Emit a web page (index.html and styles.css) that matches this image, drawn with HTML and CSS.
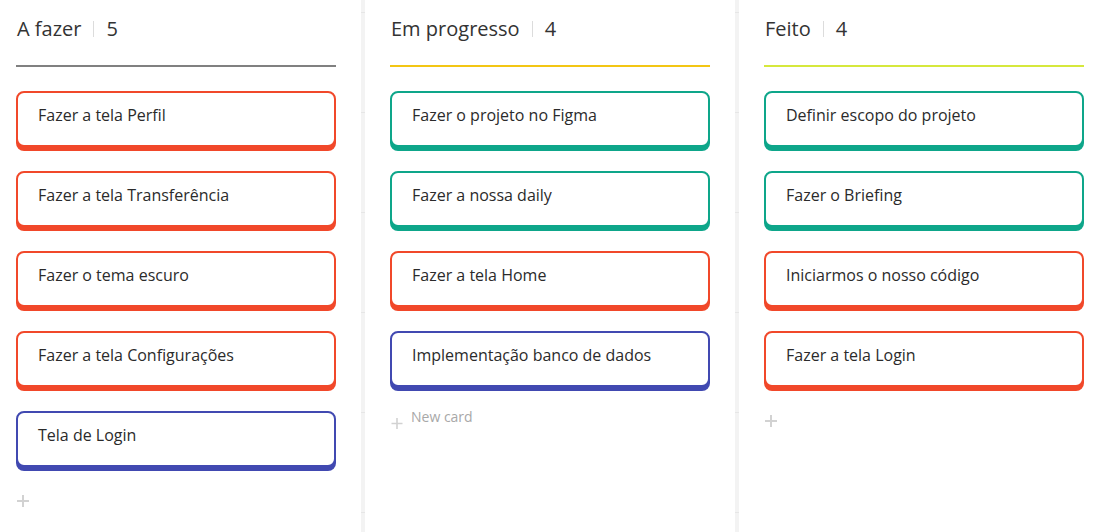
FILE: index.html
```html
<!DOCTYPE html>
<html lang="pt-BR">
<head>
<meta charset="utf-8">
<title>Kanban</title>
<link rel="stylesheet" href="styles.css">
</head>
<body>
<main class="board">
  <section class="column column-first">
    <header class="column-header header-gray">
      <h2 class="column-title">A fazer</h2>
      <span class="divider"></span>
      <span class="count">5</span>
    </header>
    <ul class="cards">
      <li class="card card-red">Fazer a tela Perfil</li>
      <li class="card card-red">Fazer a tela Transferência</li>
      <li class="card card-red">Fazer o tema escuro</li>
      <li class="card card-red">Fazer a tela Configurações</li>
      <li class="card card-blue">Tela de Login</li>
    </ul>
    <div class="add-row">
      <svg class="plus" width="12" height="12" viewBox="0 0 12 12"><path d="M6 0v12M0 6h12" stroke="#d2d2d2" stroke-width="2"/></svg>
    </div>
  </section>
  <div class="separator"></div>
  <section class="column">
    <header class="column-header header-yellow">
      <h2 class="column-title">Em progresso</h2>
      <span class="divider"></span>
      <span class="count">4</span>
    </header>
    <ul class="cards">
      <li class="card card-teal">Fazer o projeto no Figma</li>
      <li class="card card-teal">Fazer a nossa daily</li>
      <li class="card card-red">Fazer a tela Home</li>
      <li class="card card-blue">Implementação banco de dados</li>
    </ul>
    <div class="add-row add-row-text">
      <svg class="plus plus-small" width="12" height="12" viewBox="0 0 12 12"><path d="M6 1v11M0.5 6.5h11" stroke="#d2d2d2" stroke-width="1.6"/></svg>
      <span class="add-label">New card</span>
    </div>
  </section>
  <div class="separator"></div>
  <section class="column column-last">
    <header class="column-header header-lime">
      <h2 class="column-title">Feito</h2>
      <span class="divider"></span>
      <span class="count">4</span>
    </header>
    <ul class="cards">
      <li class="card card-teal">Definir escopo do projeto</li>
      <li class="card card-teal">Fazer o Briefing</li>
      <li class="card card-red">Iniciarmos o nosso código</li>
      <li class="card card-red">Fazer a tela Login</li>
    </ul>
    <div class="add-row">
      <svg class="plus" width="12" height="12" viewBox="0 0 12 12"><path d="M6 0v12M0 6h12" stroke="#d2d2d2" stroke-width="2"/></svg>
    </div>
  </section>
</main>
</body>
</html>
```

FILE: styles.css
```css
* {
  box-sizing: border-box;
}

html, body {
  margin: 0;
  padding: 0;
  background: #ffffff;
  height: 100%;
}

body {
  font-family: "Open Sans", "Noto Sans", sans-serif;
  color: #333333;
  overflow: hidden;
}

.board {
  display: flex;
  height: 532px;
}

.column {
  width: 370px;
  padding: 0 25px;
  flex: none;
}

.column-first {
  width: 361px;
  padding-left: 16px;
}

.column-last {
  flex: 1;
  padding-right: 13px;
}

.separator {
  width: 4px;
  flex: none;
  background:
    repeating-linear-gradient(to bottom,
      #f3f3f3 0px, #f3f3f3 12px,
      #e6e6e6 12px, #e6e6e6 13px,
      #f3f3f3 13px, #f3f3f3 100px);
}

.column-header {
  display: flex;
  align-items: center;
  padding: 15px 0 23px 1px;
  border-bottom: 2px solid #808080;
  margin-bottom: 24px;
}

.header-yellow {
  border-bottom-color: #f3c614;
}

.header-lime {
  border-bottom-color: #d6e83c;
}

.column-title {
  margin: 0;
  font-size: 20px;
  font-weight: 400;
  line-height: 27px;
  color: #333333;
}

.divider {
  width: 1px;
  height: 16px;
  background: #dcdcdc;
  margin: 0 12px;
}

.count {
  font-size: 20px;
  line-height: 27px;
  color: #333333;
}

.cards {
  list-style: none;
  margin: 0;
  padding: 0;
  display: flex;
  flex-direction: column;
  gap: 24px;
}

.card {
  height: 56px;
  border: 2px solid #f1482a;
  border-radius: 8px;
  box-shadow: 0 4px 0 #f1482a;
  padding: 11px 20px 0;
  font-size: 16px;
  line-height: 22px;
  color: #2b2b2b;
  background: #ffffff;
}

.card-red {
  border-color: #f1482a;
  box-shadow: 0 4px 0 #f1482a;
}

.card-teal {
  border-color: #0ea68a;
  box-shadow: 0 4px 0 #0ea68a;
}

.card-blue {
  border-color: #4149b1;
  box-shadow: 0 4px 0 #4149b1;
}

.add-row {
  display: flex;
  align-items: center;
  margin-top: 28px;
  padding-left: 1px;
  height: 12px;
}

.add-row-text {
  margin-top: 20px;
  height: 20px;
  align-items: flex-end;
}

.plus-small {
  margin-bottom: -2px;
}

.add-label {
  margin-left: 8px;
  font-size: 14px;
  line-height: 20px;
  color: #a8a8a8;
}
```
